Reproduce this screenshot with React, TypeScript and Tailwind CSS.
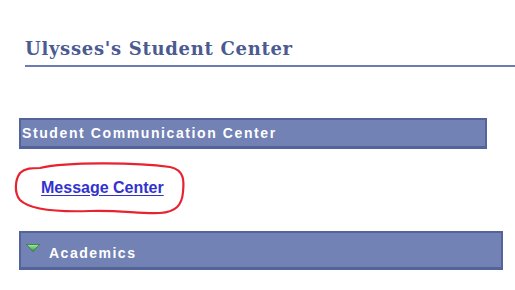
import React from "react";

export default function App() {
  return (
    <div className="relative w-[515px] h-[290px] bg-white overflow-hidden">
      <div className="pt-[37px] pl-[25px]">
        <h1
          className="text-[18px] font-bold leading-[23px] tracking-[0.7px] text-[#4b5b91]"
          style={{ fontFamily: '"DejaVu Serif", "Liberation Serif", serif' }}
        >
          Ulysses's Student Center
        </h1>
        <div className="mt-[5px] h-[2px] bg-[#6b7bb3]" />
      </div>

      <div className="pl-[19px] mt-[51px]" style={{ fontFamily: '"Liberation Sans", Arial, sans-serif' }}>
        <div className="w-[468px] h-[31px] bg-[#7282b5] border-2 border-[#55639b] border-b-[3px] flex items-center pl-[1px]">
          <span className="text-white text-[14px] font-bold tracking-[1.6px]">Student Communication Center</span>
        </div>

        <div className="h-[82px] pl-[22px] pt-[27px]">
          <a href="#" className="text-[16px] font-bold text-[#3232cf] underline underline-offset-[2px]">
            Message Center
          </a>
        </div>

        <div className="w-[484px] h-[39px] bg-[#7282b5] border-2 border-[#55639b] border-b-[3px] flex items-center pl-[5px]">
          <svg width="14" height="8" viewBox="0 0 14 8" className="mb-[4px]">
            <defs>
              <linearGradient id="g" x1="0" y1="0" x2="0" y2="1">
                <stop offset="0" stopColor="#a6eaa6" />
                <stop offset="1" stopColor="#2f9a3a" />
              </linearGradient>
            </defs>
            <polygon points="0.5,0.5 13.5,0.5 7,7.5" fill="url(#g)" stroke="#2b7a33" strokeWidth="0.8" />
          </svg>
          <span className="ml-[9px] mt-[7px] text-white text-[14px] font-bold tracking-[1.5px]">Academics</span>
        </div>
      </div>

      <svg className="absolute left-0 top-0 pointer-events-none" width="515" height="290">
        <path
          d="M40 168 C 70 161, 140 163, 170 167 C 185 170, 184 182, 183 192 C 182 205, 176 212, 160 213 C 140 214, 120 210, 90 211 C 60 212, 30 210, 20 200 C 14 193, 15 180, 20 173 C 25 168, 32 168, 40 168 Z"
          fill="none"
          stroke="#e8232f"
          strokeWidth="2.2"
        />
      </svg>
    </div>
  );
}
